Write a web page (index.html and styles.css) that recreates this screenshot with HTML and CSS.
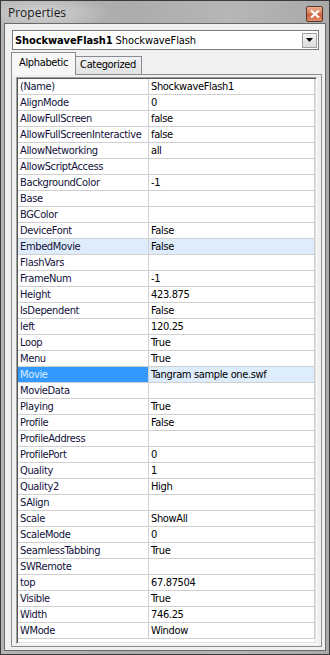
FILE: index.html
```html
<!DOCTYPE html>
<html>
<head>
<meta charset="utf-8">
<link rel="stylesheet" href="styles.css">
</head>
<body>
<div class="window">
  <div class="titlebar">
    <span class="title">Properties</span>
    <span class="close"><svg width="10" height="8" viewBox="0 0 10 8"><path d="M1 0.5 L9 7.5 M9 0.5 L1 7.5" stroke="#fff" stroke-width="2.2" fill="none"/></svg></span>
  </div>
  <div class="client">
    <div class="combo">
      <span class="combo-text"><b>ShockwaveFlash1</b> ShockwaveFlash</span>
      <span class="combo-btn"><svg width="7" height="4" viewBox="0 0 7 4"><path d="M0 0 H7 L3.5 4 Z" fill="#000"/></svg></span>
    </div>
    <div class="tabs">
      <span class="tab active">Alphabetic</span>
      <span class="tab">Categorized</span>
    </div>
    <div class="panel">
      <div class="grid">
        <div class="row"><span class="name">(Name)</span><span class="val">ShockwaveFlash1</span></div>
        <div class="row"><span class="name">AlignMode</span><span class="val">0</span></div>
        <div class="row"><span class="name">AllowFullScreen</span><span class="val">false</span></div>
        <div class="row"><span class="name">AllowFullScreenInteractive</span><span class="val">false</span></div>
        <div class="row"><span class="name">AllowNetworking</span><span class="val">all</span></div>
        <div class="row"><span class="name">AllowScriptAccess</span><span class="val"></span></div>
        <div class="row"><span class="name">BackgroundColor</span><span class="val">-1</span></div>
        <div class="row"><span class="name">Base</span><span class="val"></span></div>
        <div class="row"><span class="name">BGColor</span><span class="val"></span></div>
        <div class="row"><span class="name">DeviceFont</span><span class="val">False</span></div>
        <div class="row hover"><span class="name">EmbedMovie</span><span class="val">False</span></div>
        <div class="row"><span class="name">FlashVars</span><span class="val"></span></div>
        <div class="row"><span class="name">FrameNum</span><span class="val">-1</span></div>
        <div class="row"><span class="name">Height</span><span class="val">423.875</span></div>
        <div class="row"><span class="name">IsDependent</span><span class="val">False</span></div>
        <div class="row"><span class="name">left</span><span class="val">120.25</span></div>
        <div class="row"><span class="name">Loop</span><span class="val">True</span></div>
        <div class="row"><span class="name">Menu</span><span class="val">True</span></div>
        <div class="row selected"><span class="name">Movie</span><span class="val">Tangram sample one.swf</span></div>
        <div class="row"><span class="name">MovieData</span><span class="val"></span></div>
        <div class="row"><span class="name">Playing</span><span class="val">True</span></div>
        <div class="row"><span class="name">Profile</span><span class="val">False</span></div>
        <div class="row"><span class="name">ProfileAddress</span><span class="val"></span></div>
        <div class="row"><span class="name">ProfilePort</span><span class="val">0</span></div>
        <div class="row"><span class="name">Quality</span><span class="val">1</span></div>
        <div class="row"><span class="name">Quality2</span><span class="val">High</span></div>
        <div class="row"><span class="name">SAlign</span><span class="val"></span></div>
        <div class="row"><span class="name">Scale</span><span class="val">ShowAll</span></div>
        <div class="row"><span class="name">ScaleMode</span><span class="val">0</span></div>
        <div class="row"><span class="name">SeamlessTabbing</span><span class="val">True</span></div>
        <div class="row"><span class="name">SWRemote</span><span class="val"></span></div>
        <div class="row"><span class="name">top</span><span class="val">67.87504</span></div>
        <div class="row"><span class="name">Visible</span><span class="val">True</span></div>
        <div class="row"><span class="name">Width</span><span class="val">746.25</span></div>
        <div class="row"><span class="name">WMode</span><span class="val">Window</span></div>
      </div>
    </div>
  </div>
</div>
</body>
</html>
```

FILE: styles.css
```css
html, body {
  margin: 0;
  padding: 0;
}
body {
  width: 330px;
  height: 655px;
  overflow: hidden;
  font-family: "DejaVu Sans Condensed", "DejaVu Sans", sans-serif;
  font-stretch: condensed;
  font-size: 11px;
  letter-spacing: -0.35px;
  color: #000;
}
.window {
  box-sizing: border-box;
  width: 330px;
  height: 655px;
  border: 1px solid #3a3a3a;
  background: radial-gradient(ellipse 70px 18px at 40px 12px, #d2d2d2 0%, #c2c2c2 50%, rgba(180,180,180,0) 100%),
              linear-gradient(90deg, #b4b4b4 0%, #acacac 40%, #b6b6b6 70%, #a8a8a8 100%);
  padding: 0 3px 3px 3px;
  display: flex;
  flex-direction: column;
}
.titlebar {
  height: 22px;
  display: flex;
  align-items: center;
  justify-content: space-between;
  padding-left: 4px;
  flex: none;
}
.title {
  font-family: "Open Sans", "DejaVu Sans", sans-serif;
  font-stretch: normal;
  letter-spacing: 0;
  font-size: 12px;
  color: #1a1a1a;
}
.close {
  width: 15px;
  height: 14px;
  border: 1px solid #5a3a30;
  border-radius: 2px;
  background: linear-gradient(#eeb090, #d8744e 50%, #c85a34 51%, #e0906a);
  display: flex;
  align-items: center;
  justify-content: center;
  margin-right: 3px;
  margin-top: 4px;
}
.client {
  flex: 1;
  border: 1px solid #6a6a6a;
  background: #f0f0f0;
  padding: 6px 3px 3px 6px;
  display: flex;
  flex-direction: column;
  min-height: 0;
}
.combo {
  height: 18px;
  border: 1px solid #7a7a7a;
  background: #fff;
  margin: 0 3px 0 1px;
  display: flex;
  align-items: center;
  justify-content: space-between;
  flex: none;
}
.combo-text {
  padding-left: 2px;
  letter-spacing: -0.1px;
}
.combo-btn {
  width: 15px;
  height: 15px;
  margin-right: 1px;
  border: 1px solid #a0a0a0;
  box-sizing: border-box;
  background: linear-gradient(#f4f4f4, #dcdcdc);
  display: flex;
  align-items: center;
  justify-content: center;
}
.tabs {
  display: flex;
  align-items: flex-end;
  height: 21px;
  margin-top: 3px;
  flex: none;
}
.tab {
  height: 17px;
  line-height: 16px;
  padding: 0 5px 0 4px;
  border: 1px solid #898c95;
  border-bottom: none;
  background: linear-gradient(#f2f2f2, #e2e2e2);
  margin-left: -1px;
}
.tab.active {
  line-height: 20px;
  padding: 0 7px;
  margin-left: 0;
  background: #f7f7f7;
  position: relative;
  z-index: 1;
  margin-bottom: -1px;
  height: 22px;
}
.panel {
  flex: 1;
  border: 1px solid #898c95;
  background: #f0f0f0;
  padding: 2px 4px 2px 4px;
  display: flex;
  flex-direction: column;
  min-height: 0;
}
.grid {
  flex: 1;
  background: #fff;
  border-top: 1px solid #a0a0a0;
  border-left: 1px solid #a0a0a0;
  border-right: 1px solid #fdfdfd;
  border-bottom: 1px solid #fdfdfd;
  box-shadow: inset 1px 1px 0 #555, inset -1px -1px 0 #dcdcdc;
  padding: 1px 1px 1px 1px;
}
.row {
  display: flex;
  height: 16px;
  box-sizing: border-box;
  border-bottom: 1px solid #cfcfcf;
}
.name {
  width: 131px;
  flex: none;
  box-sizing: border-box;
  padding-left: 2px;
  border-right: 1px solid #cfcfcf;
  line-height: 15px;
  color: #10103a;
  white-space: nowrap;
  overflow: hidden;
}
.val {
  flex: 1;
  padding-left: 2px;
  line-height: 15px;
  white-space: nowrap;
  border-right: 1px solid #cfcfcf;
}
.row.hover {
  background: #deecfb;
}
.row.selected .name {
  background: #3399ff;
  color: #dcefff;
}
.row.selected .val {
  background: #deedfc;
}
```
